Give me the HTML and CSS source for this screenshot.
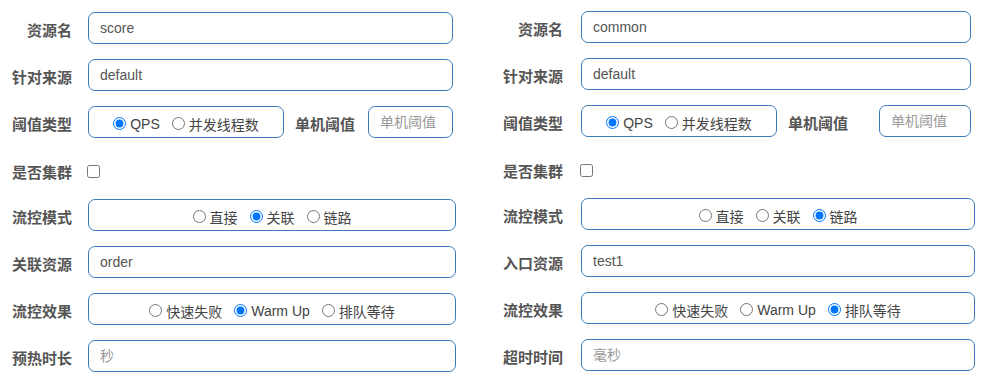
FILE: index.html
```html
<!DOCTYPE html>
<html lang="zh-CN">
<head>
<meta charset="utf-8">
<title>流控规则</title>
<link rel="stylesheet" href="styles.css">
</head>
<body>
<div class="page">
  <section class="panel panel-left">
    <div class="row">
      <span class="lbl">资源名</span>
      <input class="inp w1" type="text" value="score">
    </div>
    <div class="row">
      <span class="lbl">针对来源</span>
      <input class="inp w1" type="text" value="default">
    </div>
    <div class="row">
      <span class="lbl">阈值类型</span>
      <div class="box tbox">
        <label class="opt"><input type="radio" name="g1" checked>QPS</label>
        <label class="opt"><input type="radio" name="g1">并发线程数</label>
      </div>
      <span class="lbl2">单机阈值</span>
      <input class="inp small" type="text" placeholder="单机阈值">
    </div>
    <div class="row check-row">
      <span class="lbl">是否集群</span>
      <input class="chk" type="checkbox">
    </div>
    <div class="row">
      <span class="lbl">流控模式</span>
      <div class="box w2">
        <label class="opt"><input type="radio" name="g2">直接</label>
        <label class="opt"><input type="radio" name="g2" checked>关联</label>
        <label class="opt"><input type="radio" name="g2">链路</label>
      </div>
    </div>
    <div class="row">
      <span class="lbl">关联资源</span>
      <input class="inp w2" type="text" value="order">
    </div>
    <div class="row">
      <span class="lbl">流控效果</span>
      <div class="box w2">
        <label class="opt"><input type="radio" name="g3">快速失败</label>
        <label class="opt"><input type="radio" name="g3" checked>Warm Up</label>
        <label class="opt"><input type="radio" name="g3">排队等待</label>
      </div>
    </div>
    <div class="row">
      <span class="lbl">预热时长</span>
      <input class="inp w2" type="text" placeholder="秒">
    </div>
  </section>

  <section class="panel panel-right">
    <div class="row">
      <span class="lbl">资源名</span>
      <input class="inp w1" type="text" value="common">
    </div>
    <div class="row">
      <span class="lbl">针对来源</span>
      <input class="inp w1" type="text" value="default">
    </div>
    <div class="row">
      <span class="lbl">阈值类型</span>
      <div class="box tbox">
        <label class="opt"><input type="radio" name="h1" checked>QPS</label>
        <label class="opt"><input type="radio" name="h1">并发线程数</label>
      </div>
      <span class="lbl2">单机阈值</span>
      <input class="inp small" type="text" placeholder="单机阈值">
    </div>
    <div class="row check-row">
      <span class="lbl">是否集群</span>
      <input class="chk" type="checkbox">
    </div>
    <div class="row">
      <span class="lbl">流控模式</span>
      <div class="box w2">
        <label class="opt"><input type="radio" name="h2">直接</label>
        <label class="opt"><input type="radio" name="h2">关联</label>
        <label class="opt"><input type="radio" name="h2" checked>链路</label>
      </div>
    </div>
    <div class="row">
      <span class="lbl">入口资源</span>
      <input class="inp w2" type="text" value="test1">
    </div>
    <div class="row">
      <span class="lbl">流控效果</span>
      <div class="box w2">
        <label class="opt"><input type="radio" name="h3">快速失败</label>
        <label class="opt"><input type="radio" name="h3">Warm Up</label>
        <label class="opt"><input type="radio" name="h3" checked>排队等待</label>
      </div>
    </div>
    <div class="row">
      <span class="lbl">超时时间</span>
      <input class="inp w2" type="text" placeholder="毫秒">
    </div>
  </section>
</div>
</body>
</html>
```

FILE: styles.css
```css
* { box-sizing: border-box; }

html, body {
  margin: 0;
  padding: 0;
  background: #ffffff;
}

body {
  font-family: "Liberation Sans", "Noto Sans CJK SC", sans-serif;
  color: #555555;
  width: 1000px;
  height: 382px;
  overflow: hidden;
}

.page {
  display: flex;
}

.panel {
  display: flex;
  flex-direction: column;
  gap: 15px;
}

.panel-left {
  width: 490px;
  padding-top: 12px;
  --lw: 72px;
  --gap: 16px;
  --w1: 365px;
  --w2: 368px;
  --tw: 196px;
  --tlgap: 11px;
  --sgap: 13px;
  --sw: 85px;
}

.panel-right {
  width: 510px;
  padding-top: 11px;
  --lw: 73px;
  --gap: 18px;
  --w1: 390px;
  --w2: 394px;
  --tw: 196px;
  --tlgap: 11px;
  --sgap: 31px;
  --sw: 92px;
}

.row {
  display: flex;
  align-items: center;
  height: 32px;
}

.check-row {
  height: 31px;
  padding-top: 5px;
}

.lbl {
  width: var(--lw);
  margin-right: var(--gap);
  margin-top: 2px;
  text-align: right;
  font-size: 15px;
  font-weight: bold;
  color: #555555;
  white-space: nowrap;
  flex: none;
}

.check-row .lbl {
  margin-top: 0;
}

.lbl2 {
  margin-left: var(--tlgap);
  margin-right: var(--sgap);
  margin-top: 2px;
  font-size: 15px;
  font-weight: bold;
  color: #555555;
  white-space: nowrap;
  flex: none;
}

.inp,
.box {
  height: 32px;
  border: 1px solid #3a7cbd;
  border-radius: 7px;
  background: #ffffff;
  flex: none;
}

.inp {
  padding: 0 11px;
  font-family: "Liberation Sans", "Noto Sans CJK SC", sans-serif;
  font-size: 14px;
  color: #555555;
  outline: none;
}

.inp::placeholder {
  color: #999999;
}

.w1 { width: var(--w1); }
.w2 { width: var(--w2); }
.tbox { width: var(--tw); }
.small { width: var(--sw); }

.box {
  display: flex;
  align-items: center;
  justify-content: center;
  gap: 12px;
  padding-top: 3px;
}

.opt {
  display: flex;
  align-items: center;
  font-size: 14px;
  color: #444444;
  white-space: nowrap;
}

.opt input {
  margin: 0 4px 0 0;
  width: 13px;
  height: 13px;
}

.chk {
  margin: 0 0 0 -1px;
  width: 13px;
  height: 13px;
}
```
